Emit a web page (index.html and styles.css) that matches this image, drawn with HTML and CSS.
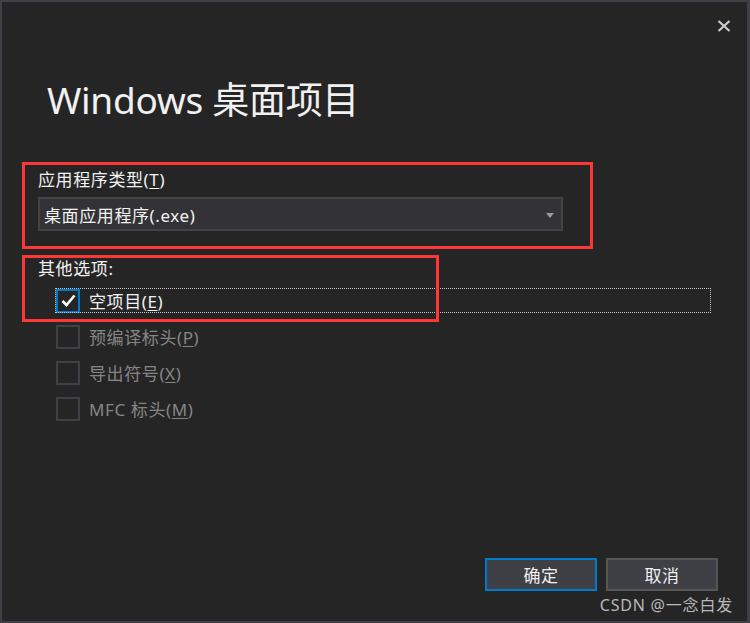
FILE: index.html
```html
<!DOCTYPE html>
<html lang="zh-CN">
<head>
<meta charset="utf-8">
<title>Windows 桌面项目</title>
<link rel="stylesheet" href="styles.css">
</head>
<body>
<div class="dialog">
  <div class="topbar">
    <button class="close" aria-label="关闭">
      <svg width="14" height="12" viewBox="0 0 14 12"><path d="M1.5 1 L12.5 11 M12.5 1 L1.5 11" stroke="#cccccc" stroke-width="2.2" fill="none"/></svg>
    </button>
  </div>
  <h1 class="title">Windows 桌面项目</h1>

  <div class="field">
    <div class="label">应用程序类型(<u>T</u>)</div>
    <div class="select">
      <span class="select-text">桌面应用程序(.exe)</span>
      <span class="arrow"></span>
    </div>
  </div>

  <div class="options">
    <div class="label">其他选项:</div>
    <ul class="checks">
      <li class="check focused"><span class="box checked"><svg width="15" height="13" viewBox="0 0 15 13"><path d="M1.5 7 L5.5 11 L13.5 1.5" stroke="#ffffff" stroke-width="2.6" fill="none"/></svg></span><span class="check-text">空项目(<u>E</u>)</span></li>
      <li class="check disabled"><span class="box"></span><span class="check-text">预编译标头(<u>P</u>)</span></li>
      <li class="check disabled"><span class="box"></span><span class="check-text">导出符号(<u>X</u>)</span></li>
      <li class="check disabled"><span class="box"></span><span class="check-text">MFC 标头(<u>M</u>)</span></li>
    </ul>
  </div>

  <div class="buttons">
    <button class="btn primary">确定</button>
    <button class="btn">取消</button>
  </div>
  <div class="watermark">CSDN @一念白发</div>

  <div class="mark mark-type"></div>
  <div class="mark mark-opts"></div>
</div>
</body>
</html>
```

FILE: styles.css
```css
* { box-sizing: border-box; }
html, body { margin: 0; padding: 0; }
body {
  width: 750px;
  height: 623px;
  background: #252526;
  font-family: "Noto Sans", "Noto Sans CJK SC", sans-serif;
  color: #f1f1f1;
}
.dialog {
  position: relative;
  width: 750px;
  height: 623px;
  background: #252526;
  border-style: solid;
  border-color: #3f3f46;
  border-width: 2px 3px 2px 2px;
  display: flex;
  flex-direction: column;
  padding-bottom: 6px;
}
.topbar {
  display: flex;
  justify-content: flex-end;
  padding: 18px 16px 0 0;
}
.close {
  background: none;
  border: 0;
  padding: 0;
  width: 14px;
  height: 12px;
  display: block;
}
.close svg { display: block; }
.title {
  margin: 46px 0 0 45px;
  font-size: 37px;
  line-height: 44px;
  font-weight: 400;
  letter-spacing: -0.3px;
  color: #f1f1f1;
}
.label {
  font-size: 17px;
  line-height: 20px;
  letter-spacing: 0.6px;
  color: #f1f1f1;
}
u { text-underline-offset: 2px; text-decoration-thickness: 1px; }
.field {
  margin: 48px 0 0 36px;
}
.select {
  margin-top: 7px;
  width: 525px;
  height: 34px;
  background: #333337;
  border: 2px solid #434346;
  display: flex;
  align-items: center;
  justify-content: space-between;
  padding: 0 7px 0 4px;
  font-size: 17px;
  letter-spacing: 0.6px;
}
.arrow {
  width: 0;
  height: 0;
  border-left: 4.5px solid transparent;
  border-right: 4.5px solid transparent;
  border-top: 5px solid #999999;
  margin-top: 2px;
}
.options {
  margin: 28px 0 0 36px;
}
.checks {
  list-style: none;
  margin: 9px 0 0 0;
  padding: 0 0 0 18px;
  display: flex;
  flex-direction: column;
  gap: 11px;
}
.check {
  display: flex;
  align-items: center;
  height: 25px;
  font-size: 17px;
  letter-spacing: 0.6px;
}
.check.focused {
  width: 656px;
  margin-left: -1px;
  outline: 1px dotted #c8c8c8;
  outline-offset: -1px;
  padding-left: 1px;
}
.box {
  width: 24px;
  height: 24px;
  border: 2px solid #3f3f46;
  background: #252526;
  display: flex;
  align-items: center;
  justify-content: center;
  flex: none;
}
.box.checked { border-color: #007acc; }
.check-text { margin-left: 9px; }
.check.disabled .check-text { color: #858585; }
.buttons {
  margin-top: auto;
  display: flex;
  justify-content: flex-end;
  gap: 9px;
  padding-right: 29px;
}
.btn {
  width: 112px;
  height: 33px;
  background: #3f3f46;
  border: 2px solid #555555;
  color: #f1f1f1;
  font-family: inherit;
  font-size: 17px;
  letter-spacing: 0.5px;
  padding: 0;
}
.btn.primary { border-color: #007acc; }
.watermark {
  margin-top: 4px;
  align-self: flex-end;
  margin-right: 14px;
  font-size: 16px;
  line-height: 20px;
  letter-spacing: 0.8px;
  color: #b8b8b8;
}
.mark {
  position: absolute;
  border: 3px solid #ff3636;
  pointer-events: none;
}
.mark-type { left: 20px; top: 160px; width: 571px; height: 87px; }
.mark-opts { left: 20px; top: 253px; width: 417px; height: 67px; }
```
